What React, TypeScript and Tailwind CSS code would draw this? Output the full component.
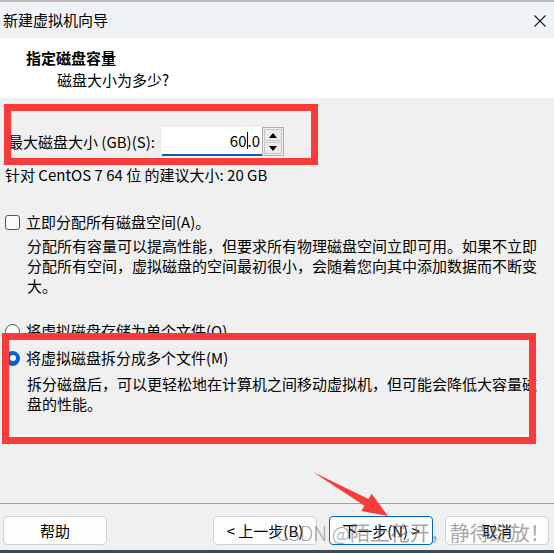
import React from "react";

function Btn({ children, primary }: { children: React.ReactNode; primary?: boolean }) {
  return (
    <div
      className={
        "w-[104px] h-[29px] rounded-[4px] bg-[#fdfdfd] flex items-center justify-center leading-[20px] whitespace-nowrap border " +
        (primary ? "border-[#0067c0]" : "border-[#d0d0d0]")
      }
    >
      {children}
    </div>
  );
}

export default function App() {
  return (
    <div className="relative w-[554px] h-[553px] overflow-hidden bg-[#f0f0f0] flex flex-col text-[15px] text-black font-['Microsoft_YaHei','Noto_Sans_CJK_SC',sans-serif]">
      <div className="h-[2px] bg-[#b9b9b9]" />
      <div className="h-[36px] bg-[#eff2f7] flex items-center justify-between pl-[3px] pr-[8px]">
        <span className="leading-[20px]">新建虚拟机向导</span>
        <svg width="12" height="12" viewBox="0 0 12 12" className="mt-[1px]">
          <path d="M0.5 0.5 L11.5 11.5 M11.5 0.5 L0.5 11.5" stroke="#1a1a1a" strokeWidth="1.1" />
        </svg>
      </div>
      <div className="h-[60px] bg-white pl-[26px] pt-[10px]">
        <div className="font-bold leading-[20px]">指定磁盘容量</div>
        <div className="mt-[2px] pl-[31px] leading-[20px]">磁盘大小为多少?</div>
      </div>

      <div className="flex-1 flex flex-col">
        <div className="mt-[29px] flex h-[29px]">
          <div className="w-[162px] pl-[8px] flex items-center leading-[20px] whitespace-nowrap">
            最大磁盘大小 (GB)(S):
          </div>
          <div className="w-[100px] bg-white border-b-2 border-[#0067c0] flex items-center justify-end pr-[2px] leading-[20px]">
            <span>60</span>
            <span className="w-px h-[17px] bg-black" />
            <span>.0</span>
          </div>
          <div className="w-[22px] border border-[#adadad] flex flex-col gap-px p-px bg-[#f0f0f0]">
            <div className="flex-1 border border-[#c6c6c6] bg-[#ececec] flex items-center justify-center">
              <svg width="8" height="5" viewBox="0 0 8 5">
                <path d="M4 0 L8 5 L0 5 Z" fill="#000" />
              </svg>
            </div>
            <div className="flex-1 border border-[#c6c6c6] bg-[#ececec] flex items-center justify-center">
              <svg width="8" height="5" viewBox="0 0 8 5">
                <path d="M0 0 L8 0 L4 5 Z" fill="#000" />
              </svg>
            </div>
          </div>
        </div>

        <div className="mt-[9px] pl-[5px] leading-[20px] whitespace-nowrap">
          针对 CentOS 7 64 位 的建议大小: 20 GB
        </div>

        <div className="mt-[27px] flex items-center h-[20px]">
          <span className="ml-[5px] w-[15px] h-[15px] border border-[#555] rounded-[3px] bg-[#fbfbfb]" />
          <span className="ml-[6px] leading-[20px]">立即分配所有磁盘空间(A)。</span>
        </div>
        <div className="mt-[4px] pl-[27px] leading-[20px] whitespace-nowrap">
          分配所有容量可以提高性能，但要求所有物理磁盘空间立即可用。如果不立即
          <br />
          分配所有空间，虚拟磁盘的空间最初很小，会随着您向其中添加数据而不断变
          <br />
          大。
        </div>

        <div className="mt-[25px] flex items-center h-[20px]">
          <span className="ml-[5px] w-[15px] h-[15px] rounded-full border border-[#555] bg-[#fbfbfb]" />
          <span className="ml-[6px] leading-[20px]">将虚拟磁盘存储为单个文件(O)</span>
        </div>
        <div className="mt-[7px] flex items-center h-[20px]">
          <span className="ml-[5px] w-[15px] h-[15px] rounded-full bg-[#0067c0] flex items-center justify-center">
            <span className="w-[6px] h-[6px] rounded-full bg-white" />
          </span>
          <span className="ml-[6px] leading-[20px]">将虚拟磁盘拆分成多个文件(M)</span>
        </div>
        <div className="mt-[6px] pl-[27px] leading-[20px] whitespace-nowrap">
          拆分磁盘后，可以更轻松地在计算机之间移动虚拟机，但可能会降低大容量磁
          <br />
          盘的性能。
        </div>
      </div>

      <div className="border-t border-[#a0a0a0] pt-[12px] pb-[5px] pl-[3px] pr-[5px] flex">
        <Btn>帮助</Btn>
        <div className="flex-1" />
        <div className="flex gap-[12px]">
          <Btn>&lt; 上一步(B)</Btn>
          <Btn primary>下一步(N) &gt;</Btn>
          <Btn>取消</Btn>
        </div>
      </div>
      <div className="h-[3px] bg-[#3e4b52]" />

      {/* annotation overlays */}
      <div className="absolute left-[4px] top-[104px] w-[314px] h-[61px] border-[7px] border-[#fb3a3a]" />
      <div className="absolute left-[2px] top-[333px] w-[534px] h-[111px] border-[7px] border-[#fb3a3a]" />
      <svg className="absolute left-0 top-0 pointer-events-none" width="554" height="553" viewBox="0 0 554 553">
        <polygon
          points="313,472 368.5,499 371.6,493.8 388,516 361.4,511 364.5,505.8"
          fill="#fb3a3a"
        />
      </svg>
      <div className="absolute left-[276px] top-[520px] text-[20px] leading-[26px] whitespace-nowrap text-[rgba(105,105,105,0.6)] pointer-events-none">
        <span className="font-light">CSDN @</span>陌上花开，静待绽放！
      </div>
    </div>
  );
}
